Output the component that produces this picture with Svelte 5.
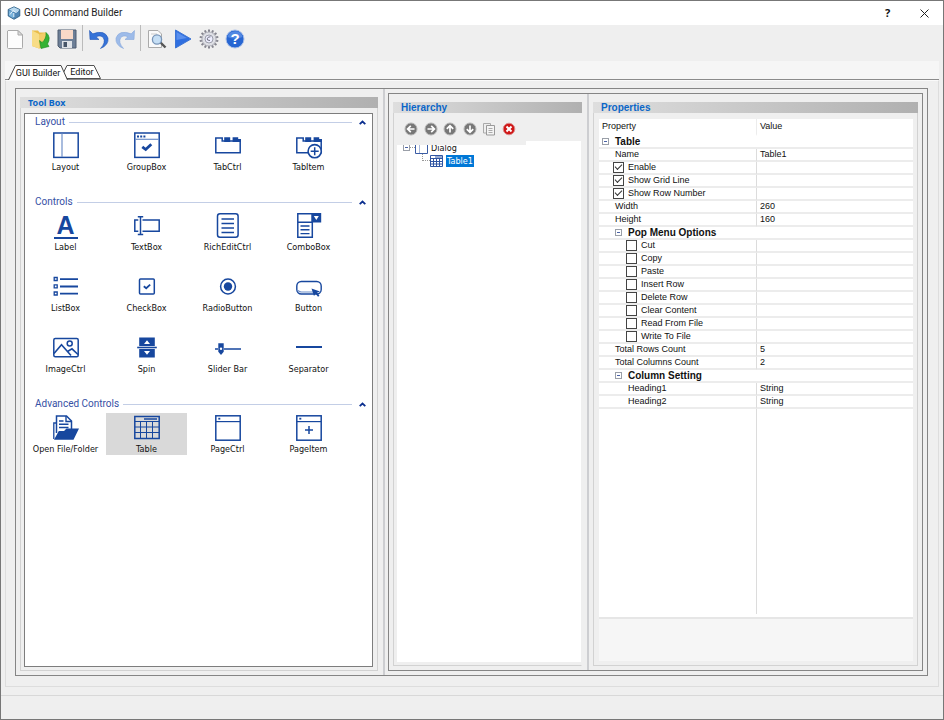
<script>
  const sections = [
    { title: 'Layout', items: ['Layout', 'GroupBox', 'TabCtrl', 'TabItem'] },
    {
      title: 'Controls',
      items: [
        'Label', 'TextBox', 'RichEditCtrl', 'ComboBox',
        'ListBox', 'CheckBox', 'RadioButton', 'Button',
        'ImageCtrl', 'Spin', 'Slider Bar', 'Separator'
      ]
    },
    { title: 'Advanced Controls', items: ['Open File/Folder', 'Table', 'PageCtrl', 'PageItem'] }
  ];

  let selectedTool = $state('Table');
  let activeTab = $state('GUI Builder');
  let closed = $state({});

  let rows = $state([
    { kind: 'group', level: 0, name: 'Table' },
    { kind: 'value', level: 1, name: 'Name', value: 'Table1' },
    { kind: 'check', level: 1, name: 'Enable', checked: true },
    { kind: 'check', level: 1, name: 'Show Grid Line', checked: true },
    { kind: 'check', level: 1, name: 'Show Row Number', checked: true },
    { kind: 'value', level: 1, name: 'Width', value: '260' },
    { kind: 'value', level: 1, name: 'Height', value: '160' },
    { kind: 'group', level: 1, name: 'Pop Menu Options' },
    { kind: 'check', level: 2, name: 'Cut', checked: false },
    { kind: 'check', level: 2, name: 'Copy', checked: false },
    { kind: 'check', level: 2, name: 'Paste', checked: false },
    { kind: 'check', level: 2, name: 'Insert Row', checked: false },
    { kind: 'check', level: 2, name: 'Delete Row', checked: false },
    { kind: 'check', level: 2, name: 'Clear Content', checked: false },
    { kind: 'check', level: 2, name: 'Read From File', checked: false },
    { kind: 'check', level: 2, name: 'Write To File', checked: false },
    { kind: 'value', level: 1, name: 'Total Rows Count', value: '5' },
    { kind: 'value', level: 1, name: 'Total Columns Count', value: '2' },
    { kind: 'group', level: 1, name: 'Column Setting' },
    { kind: 'value', level: 2, name: 'Heading1', value: 'String' },
    { kind: 'value', level: 2, name: 'Heading2', value: 'String' }
  ]);

  const gearTeeth = Array.from({ length: 14 }, (_, i) => (i * 360) / 14);
</script>

{#snippet toolIcon(name)}
  <svg class="tool-icon" viewBox="0 0 27 28" aria-hidden="true">
    {#if name === 'Layout'}
      <rect x="1.8" y="2" width="24.4" height="24.4" />
      <path d="M10 2.5V26" class="thin" />
    {:else if name === 'GroupBox'}
      <rect x="1.8" y="2" width="24.4" height="24.4" />
      <path d="M2 8.3H26" class="thin" />
      <path d="M4 5.5h2M7.2 5.5h2M10.4 5.5h2" stroke-width="2" />
      <path d="M9.3 15.8l3.4 2.7 5.6-5.2" stroke-width="2.8" />
    {:else if name === 'TabCtrl' || name === 'TabItem'}
      <path d="M1.8 21.8V7H8.2V10H26.2V21.8Z" />
      <path d="M10.2 11V6.2h6V11ZM18.6 11V6.2h5.6V8H27V11Z" class="fill" />
      {#if name === 'TabItem'}
        <circle cx="19.7" cy="20.2" r="6.6" fill="#fff" stroke-width="1.6" />
        <path d="M19.7 16.2v8M15.7 20.2h8" />
      {/if}
    {:else if name === 'Label'}
      <text x="13.5" y="22.6" text-anchor="middle" class="letter">A</text>
      <path d="M2 27H26" stroke-width="2" />
    {:else if name === 'TextBox'}
      <path d="M5.3 9H1.8V20.3H5.3M9.5 9H26.2V20.3H9.5" />
      <path d="M7.5 6V23.3M4.8 5.8H10.2M4.8 23.5H10.2" />
    {:else if name === 'RichEditCtrl'}
      <rect x="3.500" y="2.8" width="20.6" height="23.4" rx="2.5" />
      <path d="M7.500 8h12.500M7.500 12.500h12.500M7.500 17h12.500M7.500 21.500h12.500" stroke-width="1.4" />
    {:else if name === 'ComboBox'}
      <path d="M2.800 2.800H17.300V26.300H2.800ZM2.800 11.300H17.300" />
      <path d="M16.500 2H26.200V11.500H16.500Z" class="fill" />
      <path d="M18.800 5h5l-2.500 4Z" class="knock" />
      <path d="M5.500 15h9M5.500 18.800h9M5.500 22.600h9" stroke-width="1.400" />
    {:else if name === 'ListBox'}
      <path d="M2.200 5.500h3v3h-3ZM2.200 12.800h3v3h-3ZM2.200 20h3v3h-3Z" stroke-width="1.300" />
      <path d="M8 7.200H26M8 14.500H26M8 21.700H26" stroke-width="1.800" />
    {:else if name === 'CheckBox'}
      <rect x="6.500" y="7" width="14.800" height="15" rx="1" />
      <path d="M10.800 14.200l2.400 2 4-3.600" stroke-width="1.800" />
    {:else if name === 'RadioButton'}
      <circle cx="14" cy="14.500" r="7.400" />
      <circle cx="14" cy="14.500" r="4.200" class="fill" />
    {:else if name === 'Button'}
      <rect x="1.800" y="9.500" width="24.400" height="12.500" rx="4.500" stroke-width="1.400" />
      <path d="M3 18.500Q4.500 20 6.500 20H19" class="thin" />
      <path d="M16.500 16.500l8.500 3-3 1.200 2.500 3-1.500 1-2.400-3-1.600 2.300Z" class="fill" />
    {:else if name === 'ImageCtrl'}
      <rect x="1.800" y="5.500" width="24.400" height="18.300" rx="1.500" />
      <circle cx="17.700" cy="10.600" r="2.500" />
      <path d="M2 20.500L9.500 11.800 19 22.500M15.500 18.500L20 15.800 26 21.500" stroke-width="1.600" />
    {:else if name === 'Spin'}
      <path d="M6.200 4.500H21.800V13H6.200ZM6.200 16H21.800V24.500H6.200Z" class="fill" />
      <path d="M4.200 14.500H23.800" stroke-width="1.600" />
      <path d="M11 11l3-3.800 3 3.800ZM11 18h6l-3 3.800Z" class="knock" />
    {:else if name === 'Slider Bar'}
      <path d="M1 16H4M10 16H27" stroke-width="1.600" />
      <path d="M4.300 10.300H9.700V18.700L7 22 4.300 18.700Z" class="fill" />
      <circle cx="7" cy="15.700" r="1.200" class="knock" />
    {:else if name === 'Separator'}
      <path d="M1 14H27" stroke-width="2" />
    {:else if name === 'Open File/Folder'}
      <path d="M4.500 20V3H14.500L19.500 8V16" stroke-width="1.500" />
      <path d="M14 3V8.500H19.500M7 8h4.500M7 11.300h9.500M7 14.500h9.500" stroke-width="1.400" />
      <path d="M1.800 26V10H4.500" stroke-width="1.300" />
      <path d="M2 26.800L6.800 18H12L14.500 15.500H27L21.500 26.800Z" class="fill" />
    {:else if name === 'Table'}
      <rect x="1.800" y="3.500" width="24.400" height="22" />
      <path d="M2 8.500H26M2 14H26M2 19.500H26M7.500 8.500V25M13.500 8.500V25M19.500 8.500V25" stroke-width="1" />
      <path d="M11 6H24" stroke-width="1.500" />
    {:else}
      <rect x="1.800" y="2.800" width="24.400" height="24.400" />
      <path d="M2 8.600H26" stroke-width="1.200" />
      <path d="M4.300 5.700h2" stroke-width="1.800" />
      {#if name === 'PageItem'}
        <path d="M14 13v8M10 17h8" />
      {/if}
    {/if}
  </svg>
{/snippet}

{#snippet arrowBall(angle)}
  <svg width="14" height="14" viewBox="0 0 14 14" aria-hidden="true">
    <circle cx="7" cy="7" r="6" fill="#777" stroke="#b5b5b5" />
    <path d="M3.500 7H10.500M6.800 3.800L3.600 7l3.200 3.200" transform="rotate({angle} 7 7)" fill="none" stroke="#fff" stroke-width="1.700" />
  </svg>
{/snippet}

<div class="window">
  <header class="titlebar">
    <svg width="14" height="14" viewBox="0 0 14 14" aria-hidden="true">
      <path d="M7 .8L12.800 3.500V10L7 13.300 1.200 10V3.500Z" fill="#4f86b5" stroke="#24587f" stroke-width=".8" />
      <path d="M7 1.200L12.400 3.700 8 6.500 2 3.600Z" fill="#b8d9ef" />
      <path d="M2 4.500L6.500 7V12.500L2 9.500Z" fill="#79b3dc" />
      <path d="M3 8.500L6 4.500 9 6.500 11.500 4.500M6.800 7V11" stroke="#e4f2fb" fill="none" />
    </svg>
    <h1>GUI Command Builder</h1>
    <button class="caption" aria-label="Help">?</button>
    <button class="caption" aria-label="Close">
      <svg width="9" height="9" viewBox="0 0 9 9" aria-hidden="true"><path d="M.5.5l8 8M8.500.5l-8 8" stroke="#222" fill="none" /></svg>
    </button>
  </header>

  <div class="toolbar" role="toolbar" aria-label="Main">
    <button aria-label="New">
      <svg viewBox="0 0 22 22"><path d="M4 2.500H14L18.500 7V19.500a1 1 0 0 1-1 1H4.500a1 1 0 0 1-1-1V3Z" fill="#fdfdfd" stroke="#aaa" /><path d="M14 2.500V7H18.500Z" fill="#ddd" stroke="#aaa" /></svg>
    </button>
    <button aria-label="Open">
      <svg viewBox="0 0 22 22">
        <path d="M2 2.500H8L9.500 4.500H16V18L9 20.500 2 18Z" fill="#e9bd4b" />
        <path d="M2 2.500L9 6V20.500L2 18Z" fill="#f7dc86" />
        <path d="M9 6.500L16 4.500V17L9 20.500Z" fill="#f2cd68" />
        <path d="M16 4.500Q21.500 9 17.500 16L19 18.500 11 20.500 9.500 12.500 12 14.500Q16.500 11 16 4.500Z" fill="#35b234" stroke="#168a1c" stroke-width=".6" />
      </svg>
    </button>
    <button aria-label="Save">
      <svg viewBox="0 0 22 22">
        <path d="M2 2H20V20H4L2 18Z" fill="#6d7f97" stroke="#4f5d70" />
        <rect x="5" y="2" width="12" height="9" fill="#f8d9c8" />
        <rect x="6" y="13" width="10" height="7" fill="#dfe3e8" />
        <rect x="7.500" y="14" width="3.500" height="5" fill="#465468" />
      </svg>
    </button>
    <span class="sep"></span>
    <button aria-label="Undo">
      <svg viewBox="0 0 22 22"><path d="M1.500 2.500L2 11.500H11L8 8.800Q13 6.500 15.500 10 18 14.500 12.500 20.500 21 17 20 10 17 1.500 4.800 5.800Z" fill="#3673d8" stroke="#2358b5" stroke-width=".6" /></svg>
    </button>
    <button aria-label="Redo">
      <svg viewBox="0 0 22 22"><path d="M20.500 2.500L20 11.500H11L14 8.800Q9 6.500 6.500 10 4 14.500 9.500 20.500 1 17 2 10 5 1.500 17.200 5.800Z" fill="#9dbbe9" stroke="#87a8dc" stroke-width=".6" /></svg>
    </button>
    <span class="sep"></span>
    <button aria-label="Preview">
      <svg viewBox="0 0 22 22">
        <path d="M2.500 2.500H12L15.500 6V19.500H2.500Z" fill="#fafafa" stroke="#aaa" />
        <path d="M5 6h6" stroke="#ccc" />
        <path d="M14.500 14.500L19.500 19.500" stroke="#555" stroke-width="2.400" />
        <circle cx="11" cy="11.500" r="4.600" fill="#c6dff5" stroke="#7895b8" stroke-width="1.300" />
      </svg>
    </button>
    <button aria-label="Run">
      <svg viewBox="0 0 22 22"><path d="M3.500 2L19 11 3.500 20Z" fill="#2f6fe0" stroke="#3d75d4" /><path d="M4.500 4L15 10 4.500 12Z" fill="#5a90ee" /></svg>
    </button>
    <button aria-label="Settings">
      <svg viewBox="0 0 22 22">
        {#each gearTeeth as angle}
          <rect x="10" y="1.500" width="2" height="4" fill="#85858f" transform="rotate({angle} 11 11)" />
        {/each}
        <circle cx="11" cy="11" r="7" fill="#dfe0e6" stroke="#b5b6be" />
        <circle cx="11" cy="11" r="4" fill="#eef" stroke="#9c9eaa" />
        <path d="M12.500 8.800Q8.500 9 9.500 12L12 12.500" fill="none" stroke="#6f7180" />
      </svg>
    </button>
    <button aria-label="Help">
      <svg viewBox="0 0 22 22">
        <circle cx="11" cy="11" r="9" fill="#2766d2" stroke="#a9bfe8" />
        <path d="M3.500 9Q4.500 3.500 11 3.300T18.500 9Q11 12 3.500 9Z" fill="#5288e2" />
        <text x="11" y="16.200" text-anchor="middle" class="help-mark">?</text>
      </svg>
    </button>
  </div>

  <main class="workspace">
    <div class="tabs" role="tablist">
      <button role="tab" class="tab wide" aria-selected={activeTab === 'GUI Builder'} onclick={() => (activeTab = 'GUI Builder')}>
        <svg viewBox="0 0 60 15" preserveAspectRatio="none" aria-hidden="true"><path d="M.5 15L7.500.5H53L59.500 15" fill="#fff" stroke="#444" /></svg>
        <span>GUI Builder</span>
      </button>
      <button role="tab" class="tab" aria-selected={activeTab === 'Editor'} onclick={() => (activeTab = 'Editor')}>
        <svg viewBox="0 0 38 15" preserveAspectRatio="none" aria-hidden="true"><path d="M.5 8L4 .5H31L37.500 14.500H3.500Z" fill="#fff" stroke="#444" /></svg>
        <span>Editor</span>
      </button>
    </div>

    <div class="page">
      <div class="frame">
        <section class="pane toolbox">
          <div class="panel">
            <h2 class="ui">Tool Box</h2>
            <div class="palette">
              {#each sections as section}
                <section class="group">
                  <div class="group-head">
                    <h3>{section.title}</h3>
                    <span class="rule"></span>
                    <button aria-label="Collapse {section.title}" onclick={() => (closed[section.title] = !closed[section.title])}>
                      <svg width="7" height="5" viewBox="0 0 7 5" aria-hidden="true"><path d="M.7 4.200L3.500 1.500 6.300 4.200" fill="none" stroke="#0b2f8f" stroke-width="1.800" /></svg>
                    </button>
                  </div>
                  {#if !closed[section.title]}
                    <div class="items">
                      {#each section.items as item}
                        <button class="item" class:selected={selectedTool === item} onclick={() => (selectedTool = item)}>
                          {@render toolIcon(item)}
                          <span>{item}</span>
                        </button>
                      {/each}
                    </div>
                  {/if}
                </section>
              {/each}
            </div>
          </div>
        </section>

        <div class="subframe">
          <section class="pane hierarchy">
            <div class="panel">
              <h2>Hierarchy</h2>
              <div class="tree-tools">
                <button aria-label="Move left">{@render arrowBall(0)}</button>
                <button aria-label="Move right">{@render arrowBall(180)}</button>
                <button aria-label="Move up">{@render arrowBall(90)}</button>
                <button aria-label="Move down">{@render arrowBall(270)}</button>
                <button aria-label="Copy">
                  <svg width="14" height="14" viewBox="0 0 14 14" aria-hidden="true"><path d="M1.500 1.500H8.500V11H1.500Z" fill="#eee" stroke="#aaa" /><path d="M4.500 3.500H12.500V13H4.500Z" fill="#f4f4f4" stroke="#999" /><path d="M6.500 6.500h4M6.500 8.500h4M6.500 10.500h4" stroke="#aaa" /></svg>
                </button>
                <button aria-label="Delete">
                  <svg width="14" height="14" viewBox="0 0 14 14" aria-hidden="true"><circle cx="7" cy="7" r="5.800" fill="#cf1717" stroke="#d88" /><path d="M4.500 4.500l5 5M9.500 4.500l-5 5" stroke="#fff" stroke-width="2" /></svg>
                </button>
              </div>
              <div class="tree" role="tree">
                <div class="strip"></div>
                <div class="node" role="treeitem" aria-selected="false" tabindex="-1">
                  <span class="expander"></span>
                  <span class="dots"></span>
                  <svg width="13" height="13" viewBox="0 0 13 13" aria-hidden="true"><path d="M.5.5H12.500V12.500H.5Z" fill="#fff" stroke="#3a5ca5" /><path d="M4.500 1V12" stroke="#a9b9dc" /></svg>
                  <span class="name">Dialog</span>
                </div>
                <div class="node child" role="treeitem" aria-selected="true" tabindex="0">
                  <span class="elbow"></span>
                  <svg width="13" height="12" viewBox="0 0 13 12" aria-hidden="true"><path d="M.5.5H12.500V11.500H.5ZM.5 3.500H12.500M.5 6.500H12.500M.5 9H12.500M3.500 3.500V11.500M6.500 3.500V11.500M9.500 3.500V11.500" fill="#fff" stroke="#2f55a2" /><path d="M5 2H12" stroke="#2f55a2" /></svg>
                  <span class="name current">Table1</span>
                </div>
              </div>
            </div>
          </section>

          <section class="pane properties">
            <div class="panel">
              <h2>Properties</h2>
              <div class="sheet">
                <table>
                  <thead>
                    <tr><th>Property</th><th>Value</th></tr>
                  </thead>
                  <tbody>
                    {#each rows as row, i}
                      {#if row.kind === 'group'}
                        <tr><th colspan="2" class="heading l{row.level}"><span class="expander"></span>{row.name}</th></tr>
                      {:else if row.kind === 'check'}
                        <tr>
                          <td class="check l{row.level}"><label for="prop-{i}"><input id="prop-{i}" type="checkbox" bind:checked={row.checked} />{row.name}</label></td>
                          <td></td>
                        </tr>
                      {:else}
                        <tr><td class="plain l{row.level}">{row.name}</td><td>{row.value}</td></tr>
                      {/if}
                    {/each}
                  </tbody>
                </table>
                <div class="blank"></div>
                <div class="description"></div>
              </div>
            </div>
          </section>
        </div>
      </div>
    </div>
  </main>

  <footer class="status"></footer>
</div>

<style>
  :global(body) {
    margin: 0;
  }

  .window {
    box-sizing: border-box;
    min-height: 100vh;
    display: flex;
    flex-direction: column;
    border: 1px solid #777;
    background: #efefef;
    color: #111;
    font: 9px/12px "DejaVu Sans Condensed", "Noto Sans", sans-serif;
  }

  h1,
  h3 {
    margin: 0;
  }

  button {
    padding: 0;
    border: 0;
    background: none;
    color: inherit;
    font: inherit;
    display: flex;
    align-items: center;
    justify-content: center;
  }

  .titlebar {
    height: 24px;
    display: flex;
    align-items: center;
    padding-left: 6px;
    background: #fff;
  }

  .titlebar h1 {
    flex: 1;
    margin-left: 3px;
    font: 10px/14px Roboto, sans-serif;
    color: #222;
  }

  .caption {
    width: 37px;
    height: 24px;
    font: bold 11px/14px "Noto Sans", sans-serif;
  }

  .toolbar {
    height: 36px;
    display: flex;
    align-items: flex-start;
    padding-left: 1px;
  }

  .toolbar button {
    width: 26px;
    height: 28px;
  }

  .toolbar svg {
    width: 22px;
    height: 22px;
  }

  .help-mark {
    font: bold 15px "Liberation Sans", sans-serif;
    fill: #fff;
  }

  .sep {
    width: 1px;
    height: 26px;
    margin: 0 3px 0 2px;
    background: #bbb;
  }

  .workspace {
    flex: 1;
    display: flex;
    flex-direction: column;
    margin: 0 4px 8px;
  }

  .tabs {
    height: 18px;
    display: flex;
    align-items: flex-end;
    padding-left: 3px;
    background: #f6f6f6;
    border-bottom: 1px solid #8b8b8b;
  }

  .tab {
    position: relative;
    width: 38px;
    height: 14px;
    margin-left: -5px;
    font: 9px/12px Roboto, sans-serif;
  }

  .tab.wide {
    z-index: 1;
    width: 60px;
    height: 15px;
    margin: 0 0 -1px;
  }

  .tab svg {
    position: absolute;
    inset: 0;
    width: 100%;
    height: 100%;
  }

  .tab span {
    position: relative;
  }

  .page {
    flex: 1;
    display: flex;
    padding: 7px 10px 10px 9px;
    border: 1px solid #ddd;
    border-top: 1px solid #fafafa;
  }

  .frame {
    flex: 1;
    min-width: 0;
    display: flex;
    border: 1px solid #858585;
  }

  .pane {
    box-sizing: border-box;
    min-width: 0;
    display: flex;
  }

  .toolbox {
    flex: 369 1 369px;
    padding: 8px 5px 4px 4px;
    border-right: 2px solid #cdced1;
  }

  .panel {
    flex: 1;
    min-width: 0;
    display: flex;
    flex-direction: column;
    border: 1px solid #d2d2d2;
    border-top: 0;
  }

  h2 {
    height: 11px;
    margin: 0 -1px;
    padding-left: 8px;
    background: linear-gradient(90deg, #dedede, #b0b0b0);
    color: #0a66c8;
    font: bold 10px/11px "Liberation Sans", sans-serif;
  }

  h2.ui {
    font: bold 9px/11px "Noto Sans", sans-serif;
  }

  .palette {
    flex: 1;
    margin: 5px 4px 3px 3px;
    outline: 1px solid #7d7d7d;
    outline-offset: -1px;
    background: #fff;
  }

  .group {
    padding: 0 1px 20px;
  }

  .group-head {
    height: 18px;
    display: flex;
    align-items: center;
    padding: 0 6px 0 10px;
    gap: 4px;
  }

  h3 {
    font: 10px/14px Roboto, sans-serif;
    color: #3650a4;
  }

  .rule {
    flex: 1;
    height: 1px;
    margin-right: 3px;
    background: #c3cee6;
  }

  .items {
    display: grid;
    grid-template-columns: repeat(4, minmax(0, 81px));
    row-gap: 19px;
  }

  .item {
    height: 42px;
    flex-direction: column;
    justify-content: flex-start;
    gap: 2px;
    white-space: nowrap;
  }

  .item.selected {
    background: #d9d9d9;
  }

  .tool-icon {
    width: 27px;
    height: 28px;
    flex: none;
    fill: none;
    stroke: #17479e;
    stroke-width: 1.5;
    overflow: visible;
  }

  .tool-icon .thin {
    stroke: #6f8fc8;
    stroke-width: 1.2;
  }

  .tool-icon .fill {
    fill: #17479e;
    stroke: none;
  }

  .tool-icon .knock {
    fill: #fff;
    stroke: none;
  }

  .letter {
    font: bold 25px "Liberation Sans", sans-serif;
    fill: #17479e;
    stroke: none;
  }

  .subframe {
    box-sizing: border-box;
    flex: 535 1 535px;
    min-width: 0;
    display: flex;
    margin: 4px 4px 4px 3px;
    border: 1px solid #858585;
  }

  .hierarchy {
    flex: 200 1 200px;
    padding: 8px 5px 4px 4px;
    border-right: 2px solid #cdced1;
  }

  .hierarchy .panel {
    border-right-color: #efefef;
  }

  .properties {
    flex: 333 1 333px;
    padding: 8px 4px 4px;
  }

  .tree-tools {
    width: 112px;
    height: 28px;
    margin-left: 10px;
    padding-top: 4px;
    box-sizing: border-box;
    display: flex;
    align-items: center;
    justify-content: space-between;
  }

  .tree {
    flex: 1;
    position: relative;
    margin: 0 0 3px 3px;
    background: #fff;
  }

  .strip {
    position: absolute;
    z-index: 1;
    top: 0;
    left: 0;
    width: 129px;
    height: 4px;
    background: #efefef;
  }

  .node {
    height: 13px;
    display: flex;
    align-items: center;
    padding-left: 6px;
  }

  .node.child {
    padding-left: 25px;
  }

  .node .name {
    margin-left: 3px;
  }

  .node .current {
    padding: 0 1px;
    background: #0078d7;
    color: #fff;
  }

  .expander {
    flex: none;
    display: inline-block;
    box-sizing: border-box;
    width: 7px;
    height: 7px;
    border: 1px solid #9a9fa8;
    background: linear-gradient(#4b63a7, #4b63a7) center / 3px 1px no-repeat #fff;
  }

  .dots {
    width: 5px;
    border-top: 1px dotted #999;
  }

  .elbow {
    box-sizing: border-box;
    width: 8px;
    height: 7px;
    margin-bottom: 6px;
    border: dotted #999;
    border-width: 0 0 1px 1px;
  }

  .sheet {
    flex: 1;
    display: flex;
    flex-direction: column;
    margin: 6px 4px 4px 5px;
    background: #fff;
    font: 9px/11px "Liberation Sans", sans-serif;
  }

  table {
    width: 100%;
    table-layout: fixed;
    border-collapse: separate;
    border-spacing: 0;
  }

  th,
  td {
    box-sizing: border-box;
    height: 13px;
    padding: 0 0 0 3px;
    text-align: left;
    white-space: nowrap;
    line-height: 11px;
    border-bottom: 2px solid #ececec;
  }

  td + td {
    border-left: 1px solid #dcdcdc;
  }

  thead th {
    height: 17px;
    font-weight: normal;
    border-bottom-color: #fff;
  }

  thead th + th {
    border-left: 1px solid #ececec;
  }

  .heading {
    font-size: 10px;
  }

  .heading .expander {
    margin-right: 6px;
  }

  .heading.l1,
  .plain.l1 {
    padding-left: 16px;
  }

  .plain.l2 {
    padding-left: 29px;
  }

  .check.l1 {
    padding-left: 14px;
  }

  .check.l2 {
    padding-left: 27px;
  }

  label {
    height: 11px;
    display: flex;
    align-items: center;
    gap: 4px;
  }

  input {
    appearance: none;
    position: relative;
    box-sizing: border-box;
    width: 11px;
    height: 11px;
    margin: 0;
    border: 1px solid #444;
    background: #fff;
  }

  input:checked::after {
    content: "";
    position: absolute;
    top: 1px;
    left: 1px;
    width: 6px;
    height: 3px;
    border: solid #333;
    border-width: 0 0 1px 1px;
    transform: rotate(-45deg);
  }

  .blank {
    flex: 1;
    background: linear-gradient(#dcdcdc, #dcdcdc) center / 1px 100% no-repeat;
  }

  .description {
    height: 42px;
    margin-top: 3px;
    border-top: 2px solid #e6e6e6;
    background: #f6f6f6;
  }

  .status {
    height: 23px;
    border-top: 1px solid #d8d8d8;
  }
</style>
